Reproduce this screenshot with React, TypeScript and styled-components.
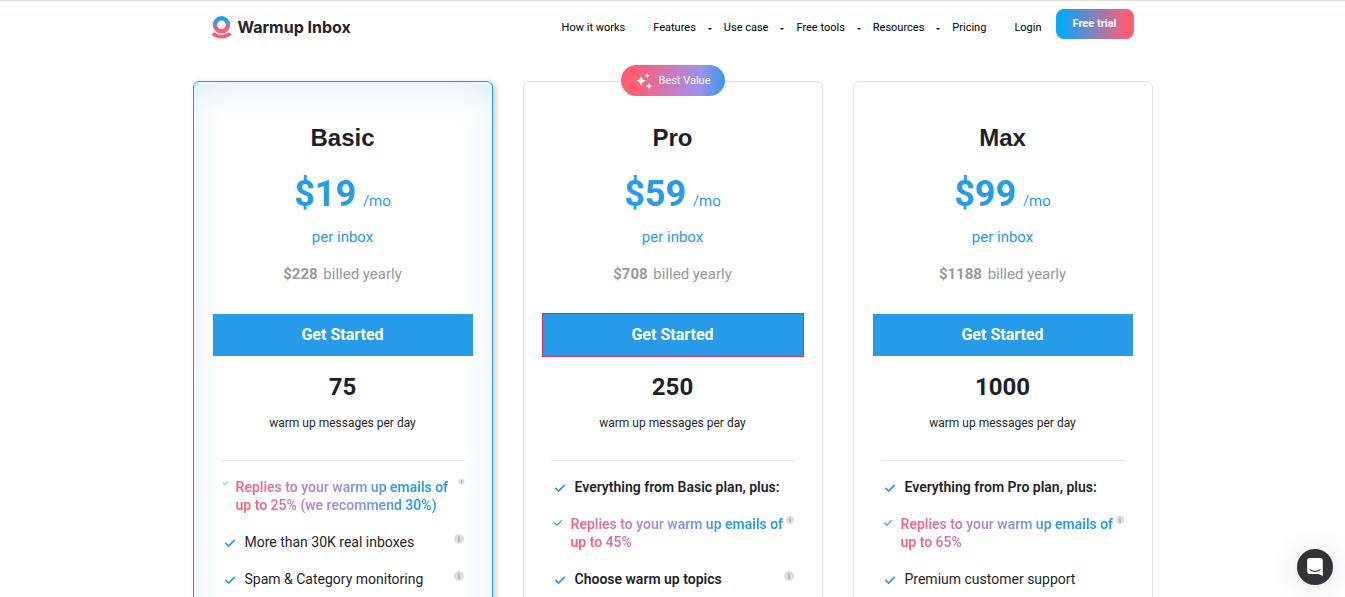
import React from "react";
import styled, { createGlobalStyle, css } from "styled-components";

const BLUE = "#289be8";
const INK = "#1e1f2b";

const GlobalStyle = createGlobalStyle`
  *, *::before, *::after { box-sizing: border-box; }
  body {
    margin: 0;
    background: #fff;
    color: ${INK};
    font-family: Roboto, "Liberation Sans", sans-serif;
  }
`;

const Page = styled.div`
  height: 100vh;
  overflow: hidden;
  border-top: 1px solid #e8dcdc;
`;

const Header = styled.header`
  display: flex;
  align-items: flex-start;
  justify-content: space-between;
  max-width: 960px;
  height: 80px;
  margin: 0 auto;
  padding: 8px 19px 0 18px;
`;

const Brand = styled.a`
  display: flex;
  align-items: center;
  gap: 6px;
  height: 36px;
  color: #23222f;
  font: 700 16px/20px Inter, "Liberation Sans", sans-serif;
  text-decoration: none;
`;

const Nav = styled.nav`
  display: flex;
  align-items: flex-start;
`;

const NavLink = styled.a`
  display: flex;
  align-items: center;
  height: 36px;
  color: #000;
  font-size: 11px;
  text-decoration: none;
  white-space: nowrap;
`;

const NavSlot = styled.span<{ $narrow?: boolean }>`
  display: flex;
  justify-content: center;
  width: ${(p) => (p.$narrow ? 14 : 28)}px;
  padding-top: 3px;
`;

const TrialButton = styled.button`
  width: 78px;
  height: 30px;
  padding: 0;
  border: 0;
  border-radius: 8px;
  background: linear-gradient(90deg, #0ea5f9 8%, #ff5d72 92%);
  color: #fff;
  font: 700 11px/16px Roboto, sans-serif;
`;

const Plans = styled.main`
  display: grid;
  grid-template-columns: repeat(3, 1fr);
  gap: 30px;
  max-width: 960px;
  margin: 0 auto;
`;

const Card = styled.section<{ $active?: boolean }>`
  position: relative;
  display: flex;
  flex-direction: column;
  min-height: 720px;
  padding: 40px 19px;
  border: 1px solid #dfe0e6;
  border-radius: 6px;
  text-align: center;
  ${(p) =>
    p.$active &&
    css`
      border-color: ${BLUE};
      box-shadow: inset 0 8px 32px rgba(40, 155, 232, 0.16), 3px 2px 7px rgba(0, 0, 0, 0.2);
    `}
`;

const Badge = styled.span`
  position: absolute;
  top: -17px;
  left: 50%;
  transform: translateX(-50%);
  display: flex;
  align-items: center;
  gap: 6px;
  height: 31px;
  padding: 0 14px;
  border-radius: 16px;
  background: linear-gradient(95deg, #ff5d72 15%, #b884d0 58%, #9c92e8 76%, ${BLUE} 102%);
  color: #fff;
  font-size: 11px;
  white-space: nowrap;
`;

const PlanName = styled.h2`
  margin: 0;
  font: 700 24px/32px "Liberation Sans", Arial, sans-serif;
`;

const Price = styled.p`
  margin: 18px 0 0;
  color: ${BLUE};
  font-size: 15px;
  line-height: 44px;
`;

const Amount = styled.strong`
  margin-right: 3px;
  font-size: 36px;
`;

const Unit = styled.p`
  margin: 4px 0 0;
  color: ${BLUE};
  font-size: 15px;
  line-height: 20px;
`;

const Billing = styled.p`
  margin: 17px 0 0;
  color: #999;
  font-size: 15px;
  line-height: 20px;

  strong { margin-right: 2px; }
`;

const StartButton = styled.button<{ $focused?: boolean }>`
  height: 42px;
  margin-top: 30px;
  border: 0;
  background: ${BLUE};
  color: #fff;
  font: 700 16px/20px Roboto, sans-serif;
  box-shadow: ${(p) => (p.$focused ? "0 0 0 1px #cc3366" : "none")};
`;

const Volume = styled.p`
  margin: 15px 0 0;
  font-size: 24px;
  font-weight: 700;
  line-height: 32px;
`;

const VolumeNote = styled.p`
  margin: 12px 8px 0;
  padding-bottom: 29px;
  border-bottom: 1px solid #e3e4e8;
  font-size: 12px;
  line-height: 16px;
`;

const FeatureList = styled.ul`
  display: flex;
  flex-direction: column;
  gap: 19px;
  margin: 17px 8px 0;
  padding: 0;
  list-style: none;
  text-align: left;
  font-size: 14px;
  line-height: 18px;
`;

const FeatureRow = styled.li`
  display: flex;
  align-items: flex-start;

  svg { flex: none; }
`;

const FeatureText = styled.span<{ $tone?: Tone }>`
  margin-left: 6px;
  color: ${INK};
  font-weight: ${(p) => (p.$tone ? 600 : 400)};
  ${(p) =>
    p.$tone === "gradient" &&
    css`
      background: linear-gradient(60deg, #ff5d72 4%, #b585d0 34%, #9c92e8 48%, ${BLUE} 76%);
      background-clip: text;
      -webkit-background-clip: text;
      color: transparent;
    `}
`;

const InfoSlot = styled.span`
  display: flex;
  margin-left: auto;
`;

const ChatButton = styled.button`
  position: fixed;
  right: 12px;
  bottom: 12px;
  display: flex;
  align-items: center;
  justify-content: center;
  width: 36px;
  height: 36px;
  padding: 0;
  border: 0;
  border-radius: 50%;
  background: #333236;
  box-shadow: 0 1px 6px rgba(0, 0, 0, 0.06), 0 2px 32px rgba(0, 0, 0, 0.12);
`;

type Tone = "strong" | "gradient";
type Feature = { text: string; tone?: Tone; check?: number; info?: number };
type Plan = {
  name: string;
  price: string;
  yearly: string;
  volume: string;
  active?: boolean;
  best?: boolean;
  features: Feature[];
};

const plans: Plan[] = [
  {
    name: "Basic",
    price: "$19",
    yearly: "$228",
    volume: "75",
    active: true,
    features: [
      { text: "Replies to your warm up emails of up to 25% (we recommend 30%)", tone: "gradient", check: 9, info: 7 },
      { text: "More than 30K real inboxes", info: 12 },
      { text: "Spam & Category monitoring", info: 12 },
    ],
  },
  {
    name: "Pro",
    price: "$59",
    yearly: "$708",
    volume: "250",
    best: true,
    features: [
      { text: "Everything from Basic plan, plus:", tone: "strong" },
      { text: "Replies to your warm up emails of up to 45%", tone: "gradient", check: 14, info: 10 },
      { text: "Choose warm up topics", tone: "strong", info: 12 },
    ],
  },
  {
    name: "Max",
    price: "$99",
    yearly: "$1188",
    volume: "1000",
    features: [
      { text: "Everything from Pro plan, plus:", tone: "strong" },
      { text: "Replies to your warm up emails of up to 65%", tone: "gradient", check: 14, info: 10 },
      { text: "Premium customer support" },
    ],
  },
];

const navItems = [
  { label: "How it works" },
  { label: "Features", menu: true },
  { label: "Use case", menu: true },
  { label: "Free tools", menu: true },
  { label: "Resources", menu: true },
  { label: "Pricing" },
  { label: "Login", last: true },
];

const Logo = () => (
  <svg width="21" height="23" viewBox="0 0 21 23" fill="none" aria-hidden="true">
    <defs>
      <linearGradient id="ring" x1="0" y1="0" x2="0" y2="1">
        <stop offset="0.05" stopColor="#0ea5f9" />
        <stop offset="0.9" stopColor="#ff5d72" />
      </linearGradient>
    </defs>
    <circle cx="10.5" cy="8.8" r="6.5" stroke="url(#ring)" strokeWidth="4.4" />
    <path d="M1.7 17.4C6.5 21.6 14.5 21.6 19.3 17.4" stroke="#ff5d72" strokeWidth="3.8" />
    <path d="M2.5 15.3C7 18.9 14 18.9 18.5 15.3" stroke="#fff" strokeWidth="1" />
  </svg>
);

const Caret = () => (
  <svg width="4" height="2" viewBox="0 0 4 2" aria-hidden="true">
    <path d="M0 0h4L2 2z" fill="#000" />
  </svg>
);

const Sparkles = () => (
  <svg width="18" height="18" viewBox="0 0 18 18" fill="#fff" aria-hidden="true">
    <path d="M6.2 3.2C7 7 8 8 11.8 8.8C8 9.6 7 10.6 6.2 14.4C5.4 10.6 4.4 9.6 .6 8.8C4.4 8 5.4 7 6.2 3.2Z" />
    <path d="M12.2 .9C12.7 2.9 13.1 3.3 15.1 3.8C13.1 4.3 12.7 4.7 12.2 6.7C11.7 4.7 11.3 4.3 9.3 3.8C11.3 3.3 11.7 2.9 12.2 .9Z" />
    <path d="M14 10.4C14.7 12.8 15.2 13.3 17.6 14C15.2 14.7 14.7 15.2 14 17.6C13.3 15.2 12.8 14.7 10.4 14C12.8 13.3 13.3 12.8 14 10.4Z" />
  </svg>
);

const Check = ({ size }: { size: number }) => (
  <svg width={size} height={size} viewBox="0 0 18 18" fill="none" aria-hidden="true">
    <path d="M4.3 9.8L7.6 13L13.8 6.9" stroke={BLUE} strokeWidth="1.7" />
  </svg>
);

const Info = ({ size }: { size: number }) => (
  <svg width={size} height={size} viewBox="0 0 12 12" aria-hidden="true">
    <circle cx="6" cy="6" r="5" fill="#dedde4" />
    <path d="M5.3 3.3h1.4v1.2H5.3zM4.9 5.2h1.8v2.7h.5v.8H4.9v-.8h.5V6h-.5z" fill="#9f9dae" />
  </svg>
);

const ChatIcon = () => (
  <svg width="16" height="18" viewBox="0 0 16 18" aria-hidden="true">
    <path d="M2.5 0h11A2.3 2.3 0 0 1 15.8 2.3V18L11.4 16H2.5A2.3 2.3 0 0 1 .2 13.7V2.3A2.3 2.3 0 0 1 2.5 0Z" fill="#fff" />
    <path d="M3 11.6C5.8 13.9 10.2 13.9 13 11.6" fill="none" stroke="#333236" strokeWidth="1.1" strokeLinecap="round" />
  </svg>
);

const PlanCard = ({ plan }: { plan: Plan }) => (
  <Card $active={plan.active}>
    {plan.best && (
      <Badge>
        <Sparkles />
        Best Value
      </Badge>
    )}
    <PlanName>{plan.name}</PlanName>
    <Price>
      <Amount>{plan.price}</Amount> /mo
    </Price>
    <Unit>per inbox</Unit>
    <Billing>
      <strong>{plan.yearly}</strong> billed yearly
    </Billing>
    <StartButton type="button" $focused={plan.best}>
      Get Started
    </StartButton>
    <Volume>{plan.volume}</Volume>
    <VolumeNote>warm up messages per day</VolumeNote>
    <FeatureList>
      {plan.features.map((f) => (
        <FeatureRow key={f.text}>
          <Check size={f.check ?? 18} />
          <FeatureText $tone={f.tone}>{f.text}</FeatureText>
          {f.info && (
            <InfoSlot>
              <Info size={f.info} />
            </InfoSlot>
          )}
        </FeatureRow>
      ))}
    </FeatureList>
  </Card>
);

export default function App() {
  return (
    <Page>
      <GlobalStyle />
      <Header>
        <Brand href="#">
          <Logo />
          Warmup Inbox
        </Brand>
        <Nav>
          {navItems.map((item) => (
            <NavLink key={item.label} href="#">
              {item.label}
              <NavSlot $narrow={item.last}>{item.menu && <Caret />}</NavSlot>
            </NavLink>
          ))}
          <TrialButton type="button">Free trial</TrialButton>
        </Nav>
      </Header>
      <Plans>
        {plans.map((plan) => (
          <PlanCard key={plan.name} plan={plan} />
        ))}
      </Plans>
      <ChatButton type="button" aria-label="Open chat">
        <ChatIcon />
      </ChatButton>
    </Page>
  );
}
